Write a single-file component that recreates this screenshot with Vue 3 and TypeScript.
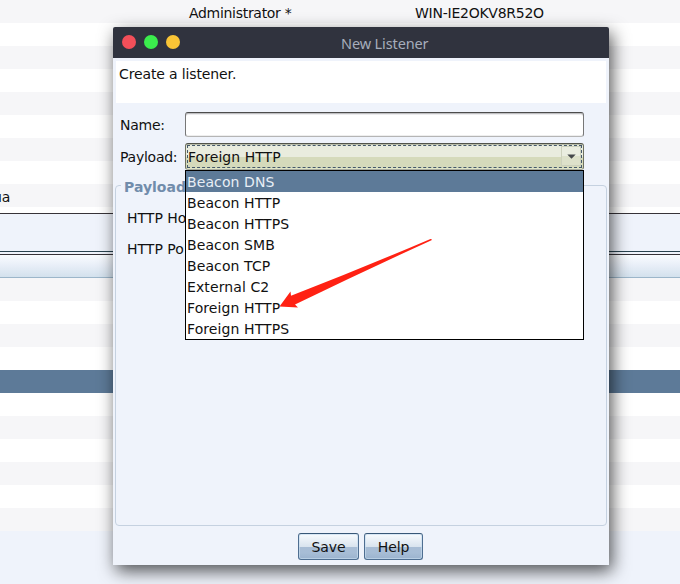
<script setup lang="ts">
import { ref } from 'vue'

interface TableRow { user?: string; host?: string; tail?: string; selected?: boolean }

const upperRows: TableRow[] = [
  { user: 'Administrator *', host: 'WIN-IE2OKV8R52O' },
  {}, {}, {}, {}, {}, {}, {},
  { tail: 'ua' },
]
const lowerRows: TableRow[] = Array.from({ length: 11 }, (_, i) => ({ selected: i === 4 }))

const payloads: string[] = [
  'Beacon DNS', 'Beacon HTTP', 'Beacon HTTPS', 'Beacon SMB',
  'Beacon TCP', 'External C2', 'Foreign HTTP', 'Foreign HTTPS',
]
const highlighted = ref('Beacon DNS')
const current = ref('Foreign HTTP')
const name = ref('')
</script>

<template>
  <div class="screen">
    <div class="table upper">
      <div v-for="(row, i) in upperRows" :key="i" class="row">
        <span v-if="row.tail" class="tail">{{ row.tail }}</span>
        <span v-if="row.user" class="user">{{ row.user }}</span>
        <span v-if="row.host" class="host">{{ row.host }}</span>
      </div>
    </div>
    <div class="tabs"></div>
    <div class="head"></div>
    <div class="table">
      <div v-for="(row, i) in lowerRows" :key="i" class="row" :class="{ selected: row.selected }"></div>
    </div>

    <div class="dialog">
      <header class="titlebar">
        <i class="dot red"></i><i class="dot green"></i><i class="dot yellow"></i>
        <span class="title">New Listener</span>
      </header>
      <div class="intro">Create a listener.</div>
      <div class="form">
        <label class="label name-label" for="name">Name:</label>
        <input id="name" v-model="name" class="field" type="text" />
        <span class="label payload-label">Payload:</span>
        <div class="combo">
          <div class="focus">
            <span class="value">{{ current }}</span>
            <span class="drop">
              <svg width="9" height="5" viewBox="0 0 9 5"><path d="M0.3 .4H8.7L4.5 4.8Z" fill="#45484b" /></svg>
            </span>
          </div>
          <ul class="popup">
            <li v-for="p in payloads" :key="p" :class="{ on: p === highlighted }" @mouseenter="highlighted = p">{{ p }}</li>
          </ul>
        </div>
      </div>
      <section class="group">
        <h2 class="legend">Payload</h2>
        <p class="option">HTTP Ho</p>
        <p class="option">HTTP Po</p>
      </section>
      <footer class="actions">
        <button class="btn save">Save</button>
        <button class="btn help">Help</button>
      </footer>
    </div>

    <svg class="arrow" width="680" height="584" viewBox="0 0 680 584">
      <path d="M279.500 306.500L290.500 291.500L291 295.800Q360 269 430.500 238.900Q432.500 238.800 431.500 240.200Q362 272 295 304.500L298 307.500Z" fill="#ff2113" />
    </svg>
  </div>
</template>

<style>
body { margin: 0; overflow: hidden; }
</style>

<style scoped>
* { box-sizing: border-box; }
.screen {
  position: relative; width: 680px; height: 584px; overflow: hidden;
  background: #eff3fb; color: #111; font: 14px/20px "DejaVu Sans", sans-serif;
}
.row { display: flex; height: 23px; line-height: 26px; background: #fff; white-space: nowrap; }
.row:nth-child(odd) { background: #f6f6f8; }
.row.selected { background: #5d7a98; }
.upper { height: 213px; background: #fff; }
.user { width: 226px; margin-left: 189px; letter-spacing: -.3px; }
.host { letter-spacing: -.25px; }
.tail { margin-left: -7px; }
.tabs { height: 39px; border-top: 1px solid #373338; border-bottom: 1px solid #29434f; }
.head {
  height: 24px; margin-top: 2px; border-top: 1px solid #373338; border-bottom: 1px solid #9cb6ca;
  background: linear-gradient(#f9fcff, #e9eff8 45%, #d3e1ed);
}
.dialog {
  position: absolute; left: 113px; top: 27px; width: 496px; height: 538px;
  display: flex; flex-direction: column; background: #eff3fb; border-radius: 2px 2px 0 0;
  box-shadow: 3px 6px 17px rgba(0, 0, 0, .68);
}
.titlebar {
  position: relative; display: flex; align-items: center; gap: 8px; height: 31px;
  padding: 0 9px 1px; background: #30333e; border-radius: 2px 2px 0 0;
}
.dot { width: 14px; height: 14px; border-radius: 50%; }
.red { background: #f34f59; }
.green { background: #3bed4d; }
.yellow { background: #fac536; }
.title {
  position: absolute; left: 228px; top: 6px; color: #a6adbb;
  font: 14.5px/20px "Noto Sans", sans-serif; letter-spacing: -.12px; white-space: nowrap;
}
.intro { height: 42px; margin: 3px 3px 0; padding: 3px; background: #fff; letter-spacing: -.13px; }
.form {
  display: grid; grid-template-columns: 65px 399px; grid-template-rows: 25px 27px;
  row-gap: 6px; padding: 9px 0 0 7px;
}
.label { line-height: 27px; letter-spacing: -.25px; }
.payload-label { line-height: 28px; }
.field {
  width: 399px; height: 25px; padding: 0 3px; border: 1px solid #777; border-top-color: #4c4c4c;
  border-bottom-color: #b5b5b5; border-radius: 3px; outline: 0; background: #fff;
  box-shadow: inset 0 1px #bfbfc1, inset 0 2px #ececee, inset 0 -1px #eee; font: inherit;
}
.combo {
  position: relative; padding: 1px; border: 1px solid #6e705f; border-top-color: #51534b;
  border-bottom-color: #a9aca0; border-radius: 3px;
  background: linear-gradient(#b8bca9 0 1px, #e9ecde 1px 13px, #d5dabb 13px 24px, #dfe5c6 24px);
}
.focus {
  display: flex; justify-content: space-between; height: 23px; border: 1px dashed #45596b;
}
.value { line-height: 23px; letter-spacing: .05px; }
.drop {
  display: flex; align-items: center; justify-content: center; width: 20px; height: 20px;
  border: 1px solid #cdd1bd; background: linear-gradient(#eaede0 50%, #dde1ca 50%);
}
.popup {
  position: absolute; left: -1px; top: 26px; width: 399px; height: 170px; margin: 0; padding: 0;
  border: 1px solid #000; background: #fff; list-style: none; letter-spacing: .1px;
}
.popup li { height: 21px; padding-left: 1px; line-height: 22px; }
.popup li.on { background: #5d7a98; color: #e8eef5; }
.group {
  height: 341px; margin: 15px 2px 0; padding: 0 11px; border: 1px solid #c5d1e0; border-radius: 4px;
}
.legend {
  width: 66px; height: 20px; margin: -9px 0 0 -6px; padding-left: 3px; background: #eff3fb;
  color: #718cab; font-size: 14px; font-weight: bold; line-height: 20px;
}
.option { height: 31px; margin: 0; line-height: 20px; }
.legend + .option { margin-top: 11px; }
.actions { display: flex; gap: 5px; padding: 7px 0 0 185px; }
.btn {
  height: 27px; padding: 1px 0 0; border: 1px solid #4e6e91; border-top-color: #385777; border-radius: 3px;
  background: linear-gradient(#f8fbfe, #d8e3ee 52%, #a8bdd5 53%, #a7bdd6 75%, #9bb3ce); color: #111; font: inherit; letter-spacing: -.1px;
  box-shadow: inset 0 0 0 1px rgba(200, 221, 240, .65);
}
.save { width: 61px; }
.help { width: 59px; }
.arrow { position: absolute; left: 0; top: 0; pointer-events: none; }
</style>
